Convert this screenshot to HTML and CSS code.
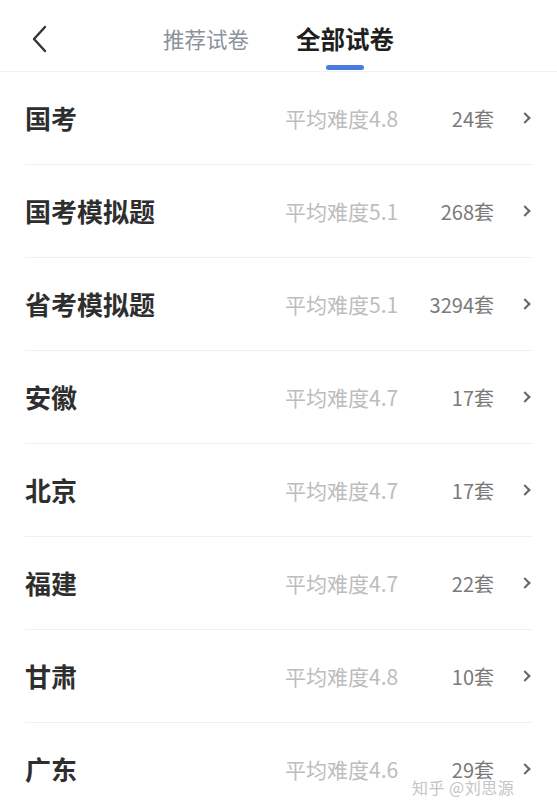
FILE: index.html
```html
<!doctype html>
<html lang="zh-CN">
  <head>
    <meta charset="utf-8" />
    <meta name="viewport" content="width=device-width" />
    <title>全部试卷</title>
    <link rel="stylesheet" href="styles.css">
  </head>
  <body>
    <header class="topbar">
      <button class="back" aria-label="返回">
        <svg width="16" height="28" viewBox="0 0 16 28"><path d="M13 2 L2 14 L13 26" fill="none" stroke="#333" stroke-width="2.4" stroke-linecap="round" stroke-linejoin="round"/></svg>
      </button>
      <nav class="tabs">
        <span class="tab">推荐试卷</span>
        <span class="tab active">全部试卷</span>
      </nav>
    </header>
    <main>
      <ul class="papers">
        <li class="paper"><span class="name">国考</span><span class="level">平均难度4.8</span><span class="count">24套</span><span class="more"></span></li>
        <li class="paper"><span class="name">国考模拟题</span><span class="level">平均难度5.1</span><span class="count">268套</span><span class="more"></span></li>
        <li class="paper"><span class="name">省考模拟题</span><span class="level">平均难度5.1</span><span class="count">3294套</span><span class="more"></span></li>
        <li class="paper"><span class="name">安徽</span><span class="level">平均难度4.7</span><span class="count">17套</span><span class="more"></span></li>
        <li class="paper"><span class="name">北京</span><span class="level">平均难度4.7</span><span class="count">17套</span><span class="more"></span></li>
        <li class="paper"><span class="name">福建</span><span class="level">平均难度4.7</span><span class="count">22套</span><span class="more"></span></li>
        <li class="paper"><span class="name">甘肃</span><span class="level">平均难度4.8</span><span class="count">10套</span><span class="more"></span></li>
        <li class="paper"><span class="name">广东</span><span class="level">平均难度4.6</span><span class="count">29套</span><span class="more"></span></li>
      </ul>
    </main>
    <div class="watermark">知乎 @刘思源</div>
  </body>
</html>
```

FILE: styles.css
```css
*, *::before, *::after {
  box-sizing: border-box;
}

html, body {
  margin: 0;
  padding: 0;
  background: #fff;
  font-family: "Noto Sans CJK SC", "Noto Sans", sans-serif;
  overflow: hidden;
}

.topbar {
  display: flex;
  align-items: center;
  height: 72px;
  border-bottom: 1px solid #f2f2f2;
  padding-left: 31px;
}

.back {
  border: 0;
  background: none;
  padding: 0;
  width: 18px;
  height: 28px;
  margin-top: 6px;
}

.tabs {
  display: flex;
  gap: 47px;
  margin-left: 114px;
  height: 100%;
}

.tab {
  position: relative;
  display: flex;
  align-items: center;
  margin-top: 6px;
  font-size: 21.5px;
  color: #8c919b;
}

.tab.active {
  font-size: 24.5px;
  font-weight: 700;
  color: #1f1f1f;
}

.tab.active::after {
  content: "";
  position: absolute;
  left: 50%;
  bottom: 1px;
  width: 38px;
  height: 5px;
  margin-left: -19px;
  border-radius: 3px;
  background: #4a7ce0;
}

.papers {
  list-style: none;
  margin: 0;
  padding: 0 25px;
}

.paper {
  display: flex;
  align-items: center;
  height: 93px;
  border-bottom: 1px solid #f0f0f0;
}

.name {
  flex: 1;
  font-size: 26px;
  font-weight: 700;
  color: #2e2e2e;
  margin-top: -2px;
}

.level {
  width: 120px;
  font-size: 21px;
  color: #bdbdbd;
  white-space: nowrap;
}

.count {
  width: 89px;
  text-align: right;
  font-size: 20px;
  color: #7a7a7a;
}

.more {
  width: 38px;
  display: flex;
  justify-content: flex-end;
  padding-right: 3px;
}

.more::before {
  content: "";
  width: 8px;
  height: 8px;
  border-top: 2px solid #666;
  border-right: 2px solid #666;
  transform: rotate(45deg);
  margin-top: 0;
}

.watermark {
  position: absolute;
  left: 412px;
  top: 775px;
  font-size: 16px;
  color: #c4c4c4;
  letter-spacing: 0.5px;
}
```
